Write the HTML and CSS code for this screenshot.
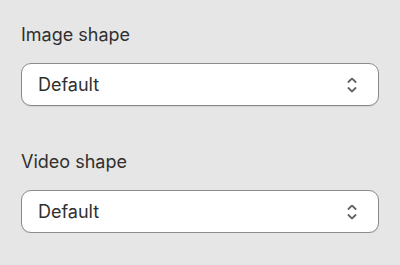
FILE: index.html
```html
<!DOCTYPE html>
<html lang="en">
<head>
<meta charset="utf-8">
<title>Shape settings</title>
<link rel="stylesheet" href="styles.css">
</head>
<body>
<div class="panel">
  <div class="field">
    <label class="label" for="image-shape">Image shape</label>
    <div class="select">
      <span class="value">Default</span>
      <svg class="chev" viewBox="0 0 20 20" width="20" height="20" aria-hidden="true">
        <path d="M10.884 4.323a1.25 1.25 0 0 0-1.768 0l-2.646 2.647a.75.75 0 0 0 1.06 1.06l2.47-2.47 2.47 2.47a.75.75 0 1 0 1.06-1.06l-2.646-2.647Z"/>
        <path d="m13.53 13.03-2.646 2.647a1.25 1.25 0 0 1-1.768 0l-2.646-2.647a.75.75 0 0 1 1.06-1.06l2.47 2.47 2.47-2.47a.75.75 0 0 1 1.06 1.06Z"/>
      </svg>
    </div>
  </div>
  <div class="field">
    <label class="label" for="video-shape">Video shape</label>
    <div class="select">
      <span class="value">Default</span>
      <svg class="chev" viewBox="0 0 20 20" width="20" height="20" aria-hidden="true">
        <path d="M10.884 4.323a1.25 1.25 0 0 0-1.768 0l-2.646 2.647a.75.75 0 0 0 1.06 1.06l2.47-2.47 2.47 2.47a.75.75 0 1 0 1.06-1.06l-2.646-2.647Z"/>
        <path d="m13.53 13.03-2.646 2.647a1.25 1.25 0 0 1-1.768 0l-2.646-2.647a.75.75 0 0 1 1.06-1.06l2.47 2.47 2.47-2.47a.75.75 0 0 1 1.06 1.06Z"/>
      </svg>
    </div>
  </div>
</div>
</body>
</html>
```

FILE: styles.css
```css
html, body {
  margin: 0;
  padding: 0;
  background: #e6e6e6;
}
body {
  font-family: Inter, "Noto Sans", sans-serif;
  color: #303030;
}
.panel {
  display: flex;
  flex-direction: column;
  gap: 46px;
  padding: 25px 21px 0 21px;
}
.field {
  display: flex;
  flex-direction: column;
  gap: 18px;
}
.label {
  font-size: 18px;
  line-height: 20px;
  color: #303030;
}
.select {
  box-sizing: border-box;
  height: 43px;
  border: 1px solid #8a8a8a;
  border-radius: 10px;
  background: #ffffff;
  box-shadow: 0 1px 0 rgba(0, 0, 0, 0.08);
  display: flex;
  align-items: center;
  justify-content: space-between;
  padding: 0 14px 0 16px;
}
.value {
  font-size: 18px;
  line-height: 20px;
  color: #303030;
}
.chev {
  width: 24px;
  height: 24px;
  fill: #616161;
}
```
